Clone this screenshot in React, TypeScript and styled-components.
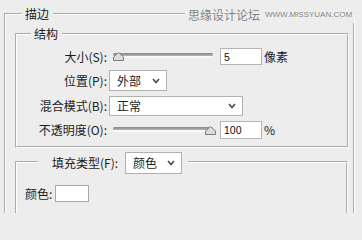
import React from 'react'
import styled, { createGlobalStyle } from 'styled-components'

const GlobalStyle = createGlobalStyle`
  html, body {
    margin: 0;
    padding: 0;
    background: #ededed;
  }
  body {
    font-family: "Noto Sans CJK SC", "Noto Sans", sans-serif;
    font-size: 12px;
    color: #1c1c1c;
  }
`

const Panel = styled.div`
  position: relative;
  width: 362px;
  height: 213px;
  overflow: hidden;
  background: #ededed;
`

// etched group box, groove on white gives dark line + white highlight
const Group = styled.fieldset<{ $w: number; $mt: number; $ml: number; $pt?: number; $pb?: number; $pl?: number }>`
  box-sizing: border-box;
  width: ${p => p.$w}px;
  min-width: 0;
  margin: ${p => p.$mt}px 0 0 ${p => p.$ml}px;
  padding: ${p => p.$pt ?? 0}px 0 ${p => p.$pb ?? 0}px ${p => p.$pl ?? 0}px;
  border: 2px groove #fff;
`

const Legend = styled.legend<{ $ml: number }>`
  margin-left: ${p => p.$ml}px;
  padding: 0 4px 0 3px;
  line-height: 16px;
  font-size: 12px;
`

const FillLegend = styled.legend`
  display: flex;
  align-items: center;
  gap: 7px;
  margin-left: 13px;
  padding: 3px 6px 0 14px;
`

const Form = styled.div`
  display: grid;
  grid-template-columns: 90px auto;
  column-gap: 2px;
  row-gap: 5px;
  align-items: center;
`

const Label = styled.span`
  text-align: right;
  line-height: 16px;
  white-space: nowrap;
`

const Controls = styled.div`
  display: flex;
  align-items: center;
`

const Slider = styled.div`
  position: relative;
  width: 100px;
  height: 17px;
  margin: 0 7px 0 4px;
`

const Track = styled.div`
  margin-top: 5px;
  height: 3px;
  border-radius: 2px;
  background: linear-gradient(#858585, #b5b5b5);
  box-shadow: 0 2px 0 #f9f9f9;
`

const Thumb = styled.svg`
  position: absolute;
  top: 4px;
`

const NumberBox = styled.input<{ $h: number }>`
  box-sizing: border-box;
  width: 42px;
  height: ${p => p.$h}px;
  margin: 0 2px 0 0;
  padding: 0 0 0 3px;
  border: 1px solid #b6b6b6;
  background: #fff;
  font-family: "Liberation Sans", Arial, sans-serif;
  font-size: 10.5px;
  color: #111;
  outline: none;
`

const Unit = styled.span`
  line-height: 16px;
`

const Dropdown = styled.div<{ $w: number; $h: number }>`
  box-sizing: border-box;
  display: flex;
  align-items: center;
  justify-content: space-between;
  width: ${p => p.$w}px;
  height: ${p => p.$h}px;
  padding: 0 6px 0 7px;
  border: 1px solid #b0b0b0;
  background: #fff;
  line-height: 16px;
`

const Chevron = styled.svg`
  flex: none;
`

const ColorRow = styled.div`
  display: flex;
  align-items: center;
  gap: 3px;
`

const Swatch = styled.div`
  width: 34px;
  height: 17px;
  box-sizing: border-box;
  border: 1px solid #a8a8a8;
  background: #fff;
`

const Watermark = styled.div`
  position: absolute;
  top: 6px;
  left: 185px;
  display: flex;
  align-items: center;
  gap: 5px;
  height: 17px;
  padding: 0 2px 0 3px;
  background: #ededed;
  color: #7e7e7e;
  text-shadow: 0 0 1px #fff;
`

const WatermarkCn = styled.span`
  font-size: 12px;
  line-height: 17px;
`

const WatermarkEn = styled.span`
  font-family: "Liberation Sans", Arial, sans-serif;
  font-size: 8px;
  line-height: 17px;
`

function Select({ value, width, height }: { value: string; width: number; height: number }) {
  return (
    <Dropdown $w={width} $h={height}>
      <span>{value}</span>
      <Chevron width="8" height="6" viewBox="0 0 8 6">
        <polyline points="1,1 4,4.5 7,1" fill="none" stroke="#4a4a4a" strokeWidth="1.6" />
      </Chevron>
    </Dropdown>
  )
}

function Range({ ratio }: { ratio: number }) {
  return (
    <Slider>
      <Track />
      <Thumb width="11" height="9" viewBox="0 0 11 9" style={{ left: Math.round(ratio * 92) }}>
        <polygon points="5.5,0.5 10.5,5 10.5,8.5 0.5,8.5 0.5,5" fill="#dcdcdc" stroke="#7a7a7a" strokeWidth="1" strokeLinejoin="round" />
      </Thumb>
    </Slider>
  )
}

export default function App() {
  return (
    <Panel>
      <GlobalStyle />
      <Group $w={351} $mt={6} $ml={4} $pb={40}>
        <Legend $ml={16}>描边</Legend>
        <Group $w={334} $mt={4} $ml={9} $pt={6} $pb={7}>
          <Legend $ml={14}>结构</Legend>
          <Form>
            <Label>大小(S):</Label>
            <Controls>
              <Range ratio={0} />
              <NumberBox $h={17} value="5" readOnly />
              <Unit>像素</Unit>
            </Controls>

            <Label>位置(P):</Label>
            <Controls>
              <Select value="外部" width={58} height={21} />
            </Controls>

            <Label>混合模式(B):</Label>
            <Controls>
              <Select value="正常" width={134} height={20} />
            </Controls>

            <Label>不透明度(O):</Label>
            <Controls>
              <Range ratio={1} />
              <NumberBox $h={18} value="100" readOnly />
              <Unit>%</Unit>
            </Controls>
          </Form>
        </Group>

        <Group $w={333} $mt={1} $ml={9} $pt={11} $pl={8} $pb={30}>
          <FillLegend>
            <Label>填充类型(F):</Label>
            <Select value="颜色" width={57} height={22} />
          </FillLegend>
          <ColorRow>
            <Label>颜色:</Label>
            <Swatch />
          </ColorRow>
        </Group>
      </Group>

      <Watermark>
        <WatermarkCn>思缘设计论坛</WatermarkCn>
        <WatermarkEn>WWW.MISSYUAN.COM</WatermarkEn>
      </Watermark>
    </Panel>
  )
}
